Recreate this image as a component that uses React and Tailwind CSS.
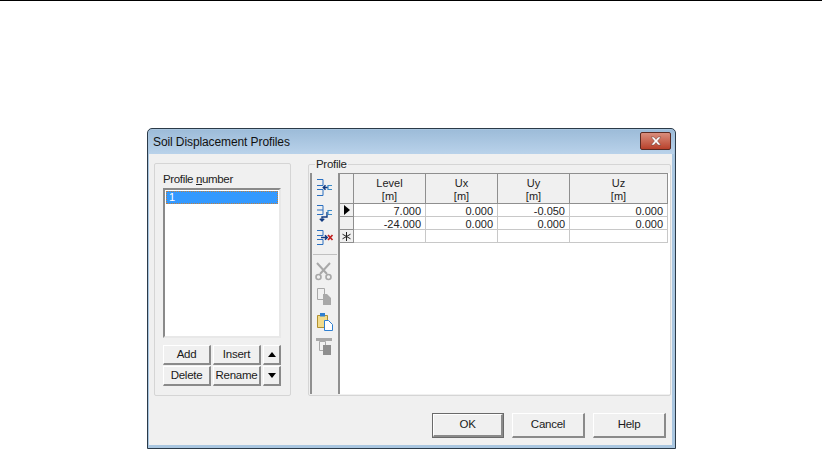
const font = { fontFamily: '"Liberation Sans", Arial, sans-serif' };

function Btn({ w, h = "h-[20px]", children }) {
  return (
    <div className={`${w} ${h} flex items-center justify-center bg-[#f0f0f0] text-[11.5px] tracking-[-0.25px] text-[#1a1a1a] border-t border-l border-t-white border-l-white border-r-2 border-b-2 border-r-[#8a8a8a] border-b-[#8a8a8a]`}>
      {children}
    </div>
  );
}

function Icon({ children, className = "" }) {
  return <svg width="22" height="22" viewBox="0 0 22 22" className={className} fill="none">{children}</svg>;
}

const Row = ({ marker, vals }) => (
  <div className="flex h-[13px] text-[11px] leading-[14px] text-[#222]">
    <div className="w-[14px] shrink-0 flex items-center justify-center bg-[#f0f0f0] border-r border-b border-[#8f8f8f]">{marker}</div>
    {[["w-[72px]", 0], ["w-[72px]", 1], ["w-[72px]", 2], ["w-[98px]", 3]].map(([w, i]) => (
      <div key={i} className={`${w} shrink-0 text-right pr-[4px] border-r border-b border-[#c8c8c8]`}>{vals[i]}</div>
    ))}
  </div>
);

const Head = ({ w, t }) => (
  <div className={`${w} shrink-0 flex flex-col items-center pt-[3px] bg-[#f0f0f0] border-t border-b border-r border-[#8f8f8f] text-[11px] leading-[13px] text-[#222]`}>
    <span>{t}</span><span>[m]</span>
  </div>
);

export default function App() {
  return (
    <div style={font} className="w-[822px] h-[449px] bg-white overflow-hidden">
      <div className="h-px bg-black" />
      <div className="ml-[147px] mt-[127px] w-[529px] h-[321px] border border-[#2b3a48] rounded-t-[5px] bg-[#a9c6e0] p-[1px] flex flex-col">
        <div className="h-[24px] shrink-0 flex items-center justify-between pl-[4px] pr-[3px] bg-gradient-to-b from-[#9dbcd9] to-[#b9d2ea] text-[12px] tracking-[-0.1px] text-[#111]">
          <span>Soil Displacement Profiles</span>
          <div className="w-[31px] h-[18px] -mt-[3px] rounded-[2px] border border-[#5a2a22] bg-gradient-to-b from-[#d98d7c] to-[#b8402a] flex items-center justify-center">
            <svg width="14" height="10" viewBox="0 0 14 10"><path d="M2 1h3l2 2.4L9 1h3L8.6 5 12 9H9L7 6.6 5 9H2l3.4-4z" fill="#fff" stroke="#6b3a30" strokeWidth=".5" /></svg>
          </div>
        </div>
        <div className="flex-1 bg-[#f0f0f0] mr-[2px] mb-[2px] flex flex-col">
          <div className="flex pt-[9px] pl-[5px]">
            <div className="w-[137px] h-[233px] shrink-0 border border-[#d5d5d5] rounded-[2px] pl-[8px] pt-[8px]">
              <div className="text-[11.5px] tracking-[-0.35px] leading-[14px] text-[#222] h-[16px]">Profile <span className="underline">n</span>umber</div>
              <div className="w-[118px] h-[150px] bg-white border-2 border-t-[#8a8a8a] border-l-[#8a8a8a] border-r-[#e8e8e8] border-b-[#e8e8e8] p-[1px]">
                <div className="h-[13px] bg-[#3399ff] text-white text-[11px] leading-[11px] pl-[2px] border border-dotted border-[#c08040]">1</div>
              </div>
              <div className="flex gap-[2px] mt-[7px]">
                <div className="flex flex-col gap-[1px]">
                  <Btn w="w-[48px]">Add</Btn>
                  <Btn w="w-[48px]">Delete</Btn>
                </div>
                <div className="flex flex-col gap-[1px]">
                  <Btn w="w-[48px]">Insert</Btn>
                  <Btn w="w-[48px]">Rename</Btn>
                </div>
                <div className="flex flex-col gap-[1px]">
                  <Btn w="w-[18px]"><svg width="8" height="5"><path d="M4 0l4 5H0z" fill="#000" /></svg></Btn>
                  <Btn w="w-[18px]"><svg width="8" height="5"><path d="M0 0h8L4 5z" fill="#000" /></svg></Btn>
                </div>
              </div>
            </div>
            <div className="relative ml-[17px] w-[363px] h-[232px] mt-[1px] border border-[#d5d5d5] rounded-[2px] pl-[1px] pt-[8px]">
              <span className="absolute -top-[7px] left-[6px] px-[1px] bg-[#f0f0f0] text-[11.5px] tracking-[-0.3px] leading-[13px] text-[#222]">Profile</span>
              <div className="flex h-[221px]">
                <div className="w-[30px] shrink-0 border-l-2 border-r-2 border-[#8f8f8f] flex flex-col items-center pt-[3px]">
                  <Icon className="mb-[3px]">
                    <path d="M3 3.5h6v6H3M3 13.5h6v6H3" stroke="#2a6fc0" />
                    <path d="M14 11.5H9.5m2-2.2-2.2 2.2 2.2 2.2" stroke="#123a80" strokeWidth="1.5" />
                    <path d="M18 9.5h-4v4h4" stroke="#3a8ac8" strokeWidth="1.2" />
                  </Icon>
                  <Icon className="mb-[3px]">
                    <path d="M3 4.5h6v9H3M3 9h6" stroke="#2a6fc0" />
                    <path d="M13 11v5H8v4M5.8 17.8 8 20l2.2-2.2" stroke="#123a80" strokeWidth="1.4" />
                    <path d="M18 9.5h-4v4h4" stroke="#3a8ac8" strokeWidth="1.2" />
                  </Icon>
                  <Icon>
                    <path d="M3 4.5h6v5H3M3 13.5h6v5H3" stroke="#2a6fc0" />
                    <path d="M7 11.5h6m-2-2.2 2.2 2.2-2.2 2.2" stroke="#123a80" strokeWidth="1.5" />
                    <path d="M14 9l4.5 5M18.5 9 14 14" stroke="#c02020" strokeWidth="1.7" />
                  </Icon>
                  <div className="w-[24px] h-px bg-[#c0c0c0] mt-[6px] mb-[5px]" />
                  <Icon className="mb-[3px]">
                    <path d="M3 3l10 11M16 3 6 14" stroke="#a8a8a8" strokeWidth="2" />
                    <circle cx="4.5" cy="17" r="2.5" stroke="#a8a8a8" strokeWidth="1.6" />
                    <circle cx="14.5" cy="17" r="2.5" stroke="#a8a8a8" strokeWidth="1.6" />
                  </Icon>
                  <Icon className="mb-[3px]">
                    <path d="M3.5 3.5h7v11h-7z" fill="#f0f0f0" stroke="#a8a8a8" />
                    <path d="M9 9h4l4 4v7H9z" fill="#a8a8a8" />
                  </Icon>
                  <Icon className="mb-[3px]">
                    <path d="M3.5 5.5h10v12h-10z" fill="#f2dc8c" stroke="#b09030" />
                    <path d="M6 3h5v3.5H6z" fill="#2f7fd0" />
                    <path d="M10.5 10.5h4l4 4v6h-8z" fill="#fff" stroke="#2f7fd0" />
                  </Icon>
                  <Icon>
                    <path d="M2 3h16v3H2z" fill="#a8a8a8" />
                    <path d="M5.5 6.5h6v9h-6z" fill="#f0f0f0" stroke="#a8a8a8" />
                    <path d="M9 10h8v10H9z" fill="#8e8e8e" />
                  </Icon>
                </div>
                <div className="flex-1 bg-white">
                  <div className="flex h-[31px]">
                    <div className="w-[14px] shrink-0 bg-[#f0f0f0] border-t border-b border-r border-[#8f8f8f]" />
                    <Head w="w-[72px]" t="Level" />
                    <Head w="w-[72px]" t="Ux" />
                    <Head w="w-[72px]" t="Uy" />
                    <Head w="w-[98px]" t="Uz" />
                  </div>
                  <Row marker={<svg width="6" height="10"><path d="M0 0l6 5-6 5z" fill="#000" /></svg>} vals={["7.000", "0.000", "-0.050", "0.000"]} />
                  <Row vals={["-24.000", "0.000", "0.000", "0.000"]} />
                  <Row marker={<svg width="9" height="9" viewBox="0 0 9 9"><path d="M4.5 0v9M0.5 2.2l8 4.6M8.5 2.2l-8 4.6" stroke="#222" strokeWidth="1" /></svg>} vals={["", "", "", ""]} />
                </div>
              </div>
            </div>
          </div>
          <div className="flex justify-end gap-[8px] mt-[17px] pr-[6px]">
            <div className="border border-[#6a6a6a]">
              <Btn w="w-[70px]" h="h-[23px]">OK</Btn>
            </div>
            <Btn w="w-[73px]" h="h-[25px]">Cancel</Btn>
            <Btn w="w-[73px]" h="h-[25px]">Help</Btn>
          </div>
        </div>
      </div>
    </div>
  );
}
